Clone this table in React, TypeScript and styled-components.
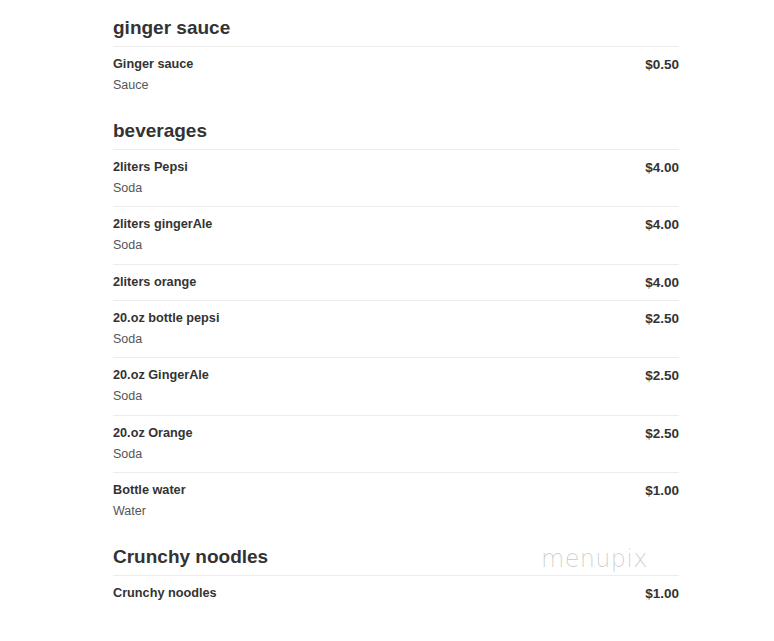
import React from "react";
import styled, { createGlobalStyle } from "styled-components";

const GlobalStyle = createGlobalStyle`
  html, body {
    margin: 0;
    padding: 0;
    background: #fff;
  }
  body {
    font-family: "Liberation Sans", Arial, sans-serif;
    color: #333;
  }
`;

interface MenuItem {
  name: string;
  price: string;
  desc?: string;
}

interface MenuSection {
  title: string;
  items: MenuItem[];
}

const menu: MenuSection[] = [
  {
    title: "ginger sauce",
    items: [{ name: "Ginger sauce", price: "$0.50", desc: "Sauce" }],
  },
  {
    title: "beverages",
    items: [
      { name: "2liters Pepsi", price: "$4.00", desc: "Soda" },
      { name: "2liters gingerAle", price: "$4.00", desc: "Soda" },
      { name: "2liters orange", price: "$4.00" },
      { name: "20.oz bottle pepsi", price: "$2.50", desc: "Soda" },
      { name: "20.oz GingerAle", price: "$2.50", desc: "Soda" },
      { name: "20.oz Orange", price: "$2.50", desc: "Soda" },
      { name: "Bottle water", price: "$1.00", desc: "Water" },
    ],
  },
  {
    title: "Crunchy noodles",
    items: [{ name: "Crunchy noodles", price: "$1.00" }],
  },
];

const Page = styled.div`
  position: relative;
  width: 566px;
  margin: 0 auto 0 113px;
  padding-top: 15px;
`;

const Section = styled.section`
  & + & {
    margin-top: 14px;
  }
`;

const Heading = styled.h2`
  margin: 0;
  padding-bottom: 5px;
  font-size: 19px;
  line-height: 26px;
  font-weight: bold;
  color: #333;
  border-bottom: 1px solid #ececec;
`;

const Row = styled.div`
  display: flex;
  justify-content: space-between;
  align-items: flex-start;
  padding: 7px 0;
  & + & {
    border-top: 1px solid #ececec;
  }
`;

const Info = styled.div`
  display: flex;
  flex-direction: column;
`;

const Name = styled.div`
  font-size: 12.7px;
  line-height: 21px;
  font-weight: bold;
  color: #333;
`;

const Desc = styled.div`
  font-size: 12.5px;
  line-height: 21.5px;
  color: #555;
`;

const Price = styled.div`
  font-size: 13.5px;
  line-height: 21px;
  font-weight: bold;
  color: #333;
`;

const Watermark = styled.div`
  position: absolute;
  left: 428px;
  top: 545px;
  font-family: "DejaVu Sans", sans-serif;
  font-weight: 200;
  font-size: 24px;
  letter-spacing: 0.3px;
  color: rgba(0, 0, 0, 0.2);
  pointer-events: none;
`;

export default function App() {
  return (
    <>
      <GlobalStyle />
      <Page>
        {menu.map((section) => (
          <Section key={section.title}>
            <Heading>{section.title}</Heading>
            {section.items.map((item, i) => (
              <Row key={i}>
                <Info>
                  <Name>{item.name}</Name>
                  {item.desc && <Desc>{item.desc}</Desc>}
                </Info>
                <Price>{item.price}</Price>
              </Row>
            ))}
          </Section>
        ))}
        <Watermark>menupix</Watermark>
      </Page>
    </>
  );
}
